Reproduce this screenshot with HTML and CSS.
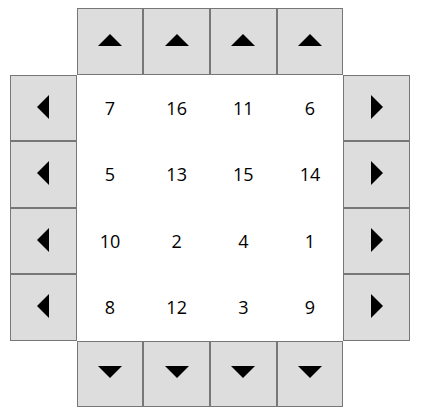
FILE: index.html
```html
<!DOCTYPE html>
<html lang="en">

<head>
  <meta charset="UTF-8">
  <meta name="viewport" content="width=device-width, initial-scale=1.0">
  <title>Slide Puzzle</title>
  <link rel="stylesheet" href="styles.css">
</head>

<body>
  <div class="board">
    <div class="corner"></div>
    <button class="shift"><svg class="arrow-h" viewBox="0 0 24 12"><polygon points="0,12 12,0 24,12"/></svg></button>
    <button class="shift"><svg class="arrow-h" viewBox="0 0 24 12"><polygon points="0,12 12,0 24,12"/></svg></button>
    <button class="shift"><svg class="arrow-h" viewBox="0 0 24 12"><polygon points="0,12 12,0 24,12"/></svg></button>
    <button class="shift"><svg class="arrow-h" viewBox="0 0 24 12"><polygon points="0,12 12,0 24,12"/></svg></button>
    <div class="corner"></div>

    <button class="shift"><svg class="arrow-v" viewBox="0 0 12 24"><polygon points="12,0 0,12 12,24"/></svg></button>
    <div class="cell">7</div>
    <div class="cell">16</div>
    <div class="cell">11</div>
    <div class="cell">6</div>
    <button class="shift"><svg class="arrow-v" viewBox="0 0 12 24"><polygon points="0,0 12,12 0,24"/></svg></button>

    <button class="shift"><svg class="arrow-v" viewBox="0 0 12 24"><polygon points="12,0 0,12 12,24"/></svg></button>
    <div class="cell">5</div>
    <div class="cell">13</div>
    <div class="cell">15</div>
    <div class="cell">14</div>
    <button class="shift"><svg class="arrow-v" viewBox="0 0 12 24"><polygon points="0,0 12,12 0,24"/></svg></button>

    <button class="shift"><svg class="arrow-v" viewBox="0 0 12 24"><polygon points="12,0 0,12 12,24"/></svg></button>
    <div class="cell">10</div>
    <div class="cell">2</div>
    <div class="cell">4</div>
    <div class="cell">1</div>
    <button class="shift"><svg class="arrow-v" viewBox="0 0 12 24"><polygon points="0,0 12,12 0,24"/></svg></button>

    <button class="shift"><svg class="arrow-v" viewBox="0 0 12 24"><polygon points="12,0 0,12 12,24"/></svg></button>
    <div class="cell">8</div>
    <div class="cell">12</div>
    <div class="cell">3</div>
    <div class="cell">9</div>
    <button class="shift"><svg class="arrow-v" viewBox="0 0 12 24"><polygon points="0,0 12,12 0,24"/></svg></button>

    <div class="corner"></div>
    <button class="shift"><svg class="arrow-h" viewBox="0 0 24 12"><polygon points="0,0 24,0 12,12"/></svg></button>
    <button class="shift"><svg class="arrow-h" viewBox="0 0 24 12"><polygon points="0,0 24,0 12,12"/></svg></button>
    <button class="shift"><svg class="arrow-h" viewBox="0 0 24 12"><polygon points="0,0 24,0 12,12"/></svg></button>
    <button class="shift"><svg class="arrow-h" viewBox="0 0 24 12"><polygon points="0,0 24,0 12,12"/></svg></button>
    <div class="corner"></div>
  </div>
</body>

</html>
```

FILE: styles.css
```css
body {
  margin: 8px 10px;
  background: #ffffff;
  font-family: "Open Sans", "Noto Sans", sans-serif;
  color: #000000;
}

.board {
  display: grid;
  grid-template-columns: repeat(6, 66.67px);
  grid-template-rows: repeat(6, 66.5px);
  width: 400px;
}

.shift {
  display: flex;
  align-items: center;
  justify-content: center;
  margin: 0;
  padding: 0;
  background: #dddddd;
  border: 1px solid #777777;
  cursor: pointer;
}

.arrow-h {
  width: 24px;
  height: 12px;
  margin-top: -3px;
}

.arrow-v {
  width: 12px;
  height: 24px;
  margin-top: -2px;
}

.cell {
  display: flex;
  align-items: center;
  justify-content: center;
  font-size: 18px;
}
```
